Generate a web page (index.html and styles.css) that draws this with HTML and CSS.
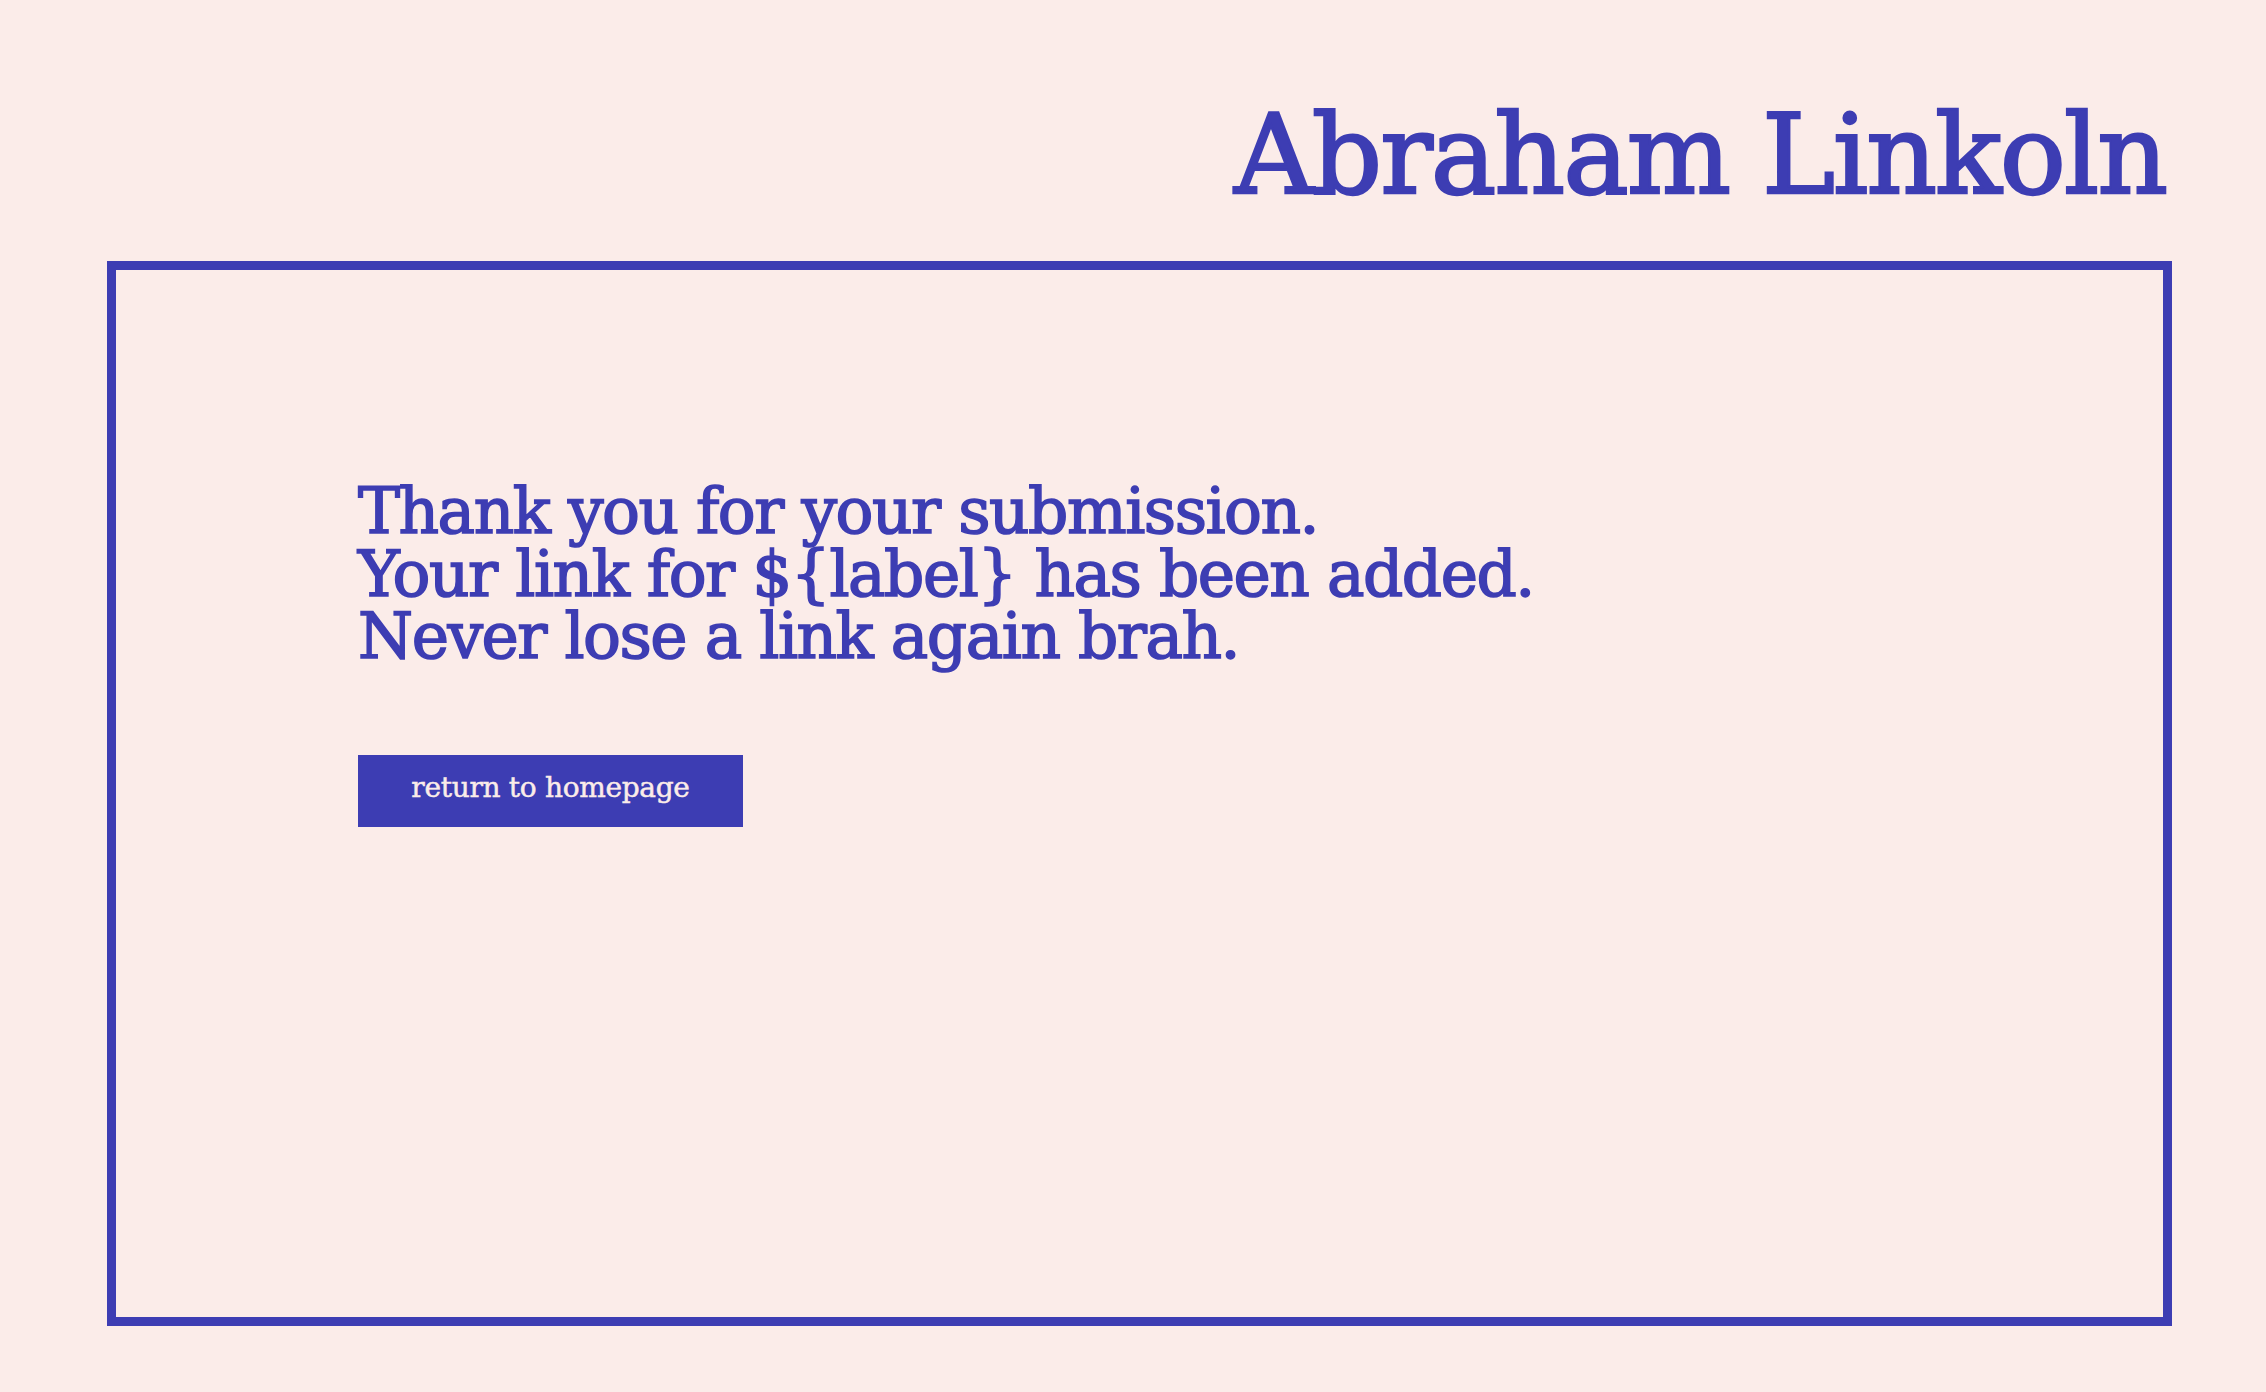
FILE: index.html
```html
<!DOCTYPE html>
<html lang="en">
<head>
<meta charset="utf-8">
<title>Abraham Linkoln</title>
<link rel="stylesheet" href="styles.css">
</head>
<body>
<div class="page">
  <header class="site-header">
    <h1 class="site-title">Abraham Linkoln</h1>
  </header>
  <main class="panel">
    <div class="message">
      <p class="message-line">Thank you for your submission.</p>
      <p class="message-line">Your link for ${label} has been added.</p>
      <p class="message-line">Never lose a link again brah.</p>
    </div>
    <a class="home-button" href="#">return to homepage</a>
  </main>
</div>
</body>
</html>
```

FILE: styles.css
```css
html, body {
  margin: 0;
  padding: 0;
  background: #fbece9;
}

body {
  font-family: "DejaVu Serif", "Liberation Serif", serif;
  color: #3d3db3;
}

.page {
  display: flex;
  flex-direction: column;
  padding: 0 94px 0 107px;
  height: 1392px;
  box-sizing: border-box;
}

.site-header {
  display: flex;
  justify-content: flex-end;
  padding-right: 6px;
  height: 261px;
  box-sizing: border-box;
  padding-top: 100px;
}

.site-title {
  margin: 0;
  font-size: 110px;
  font-weight: normal;
  line-height: 1;
  letter-spacing: -2px;
  -webkit-text-stroke: 2.5px #3d3db3;
}

.panel {
  width: 2065px;
  height: 1065px;
  box-sizing: border-box;
  border: 9.5px solid #3d3db3;
  padding: 211px 0 0 242px;
  display: flex;
  flex-direction: column;
  align-items: flex-start;
}

.message {
  display: flex;
  flex-direction: column;
}

.message-line {
  margin: 0;
  font-size: 63px;
  line-height: 62.5px;
  letter-spacing: -1.5px;
  -webkit-text-stroke: 1.6px #3d3db3;
}

.home-button {
  margin-top: 86px;
  display: flex;
  align-items: center;
  justify-content: center;
  width: 385px;
  height: 72px;
  box-sizing: border-box;
  background: #3d3db3;
  color: #fbece9;
  text-decoration: none;
  font-size: 28px;
  letter-spacing: -0.3px;
  padding-bottom: 6px;
  -webkit-text-stroke: 0.5px #fbece9;
}
```
